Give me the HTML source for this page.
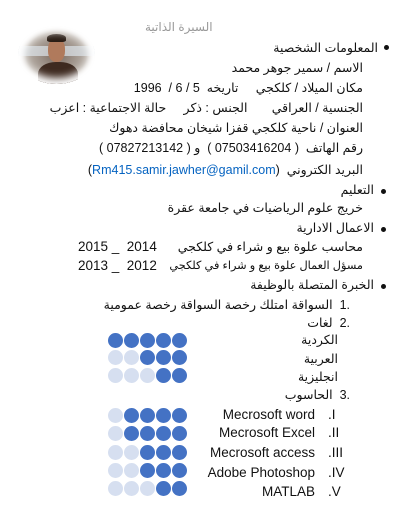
<!DOCTYPE html>
<html><head><meta charset="utf-8"><style>
body{margin:0;width:400px;height:512px;background:#fff;position:relative;overflow:hidden;font-family:"Liberation Sans","DejaVu Sans",sans-serif;color:#111}
.t{position:absolute;direction:rtl;white-space:nowrap;font-size:12.5px;line-height:16px}
.e{position:absolute;white-space:nowrap;font-size:13.5px;line-height:16px;text-align:right}
.b{position:absolute;width:5px;height:5px;border-radius:50%;background:#111}
.d{position:absolute;width:15px;height:15px;border-radius:50%;background:#4472c4}
.l{background:#d6dff0}
a{color:#0563c1}
</style></head><body>
<div class="t" style="left:145px;top:19px;color:#999;font-size:12px">السيرة الذاتية</div>
<div style="position:absolute;left:18px;top:26px;width:77px;height:58px;border-radius:50%;overflow:hidden;background:radial-gradient(ellipse at center,#7a6a60 0%,#b8b0a8 55%,#fff 72%)">
<div style="position:absolute;left:0;top:20px;width:77px;height:10px;background:#dde4ea;opacity:.7"></div>
<div style="position:absolute;left:20px;top:36px;width:40px;height:26px;border-radius:45% 45% 0 0;background:#3e2a20"></div>
<div style="position:absolute;left:30px;top:12px;width:17px;height:24px;border-radius:45%;background:#b07a5c"></div>
<div style="position:absolute;left:29px;top:8px;width:19px;height:8px;border-radius:50% 50% 20% 20%;background:#2a1d15"></div>
<div style="position:absolute;inset:0;border-radius:50%;box-shadow:inset 0 0 8px 6px #fff"></div>
</div>
<div class="b" style="left:384px;top:45px"></div>
<div class="t" style="right:22px;top:40px">المعلومات الشخصية</div>
<div class="t" style="right:37px;top:60px">الاسم / سمير جوهر محمد</div>
<div class="t" style="right:37px;top:80px">مكان الميلاد / كلكجي &nbsp;&nbsp;&nbsp; تاريخه &nbsp;5 / 6 / &nbsp;1996</div>
<div class="t" style="right:37px;top:100px">الجنسية / العراقي &nbsp;&nbsp;&nbsp;&nbsp;&nbsp; الجنس : ذكر &nbsp;&nbsp;&nbsp; حالة الاجتماعية : اعزب</div>
<div class="t" style="right:37px;top:120px">العنوان / ناحية كلكجي قفزا شيخان محافضة دهوك</div>
<div class="t" style="right:37px;top:140px">رقم الهاتف &nbsp;( 07503416204 ) &nbsp;و ( 07827213142 )</div>
<div class="t" style="right:37px;top:162px">البريد الكتروني &nbsp;(<a>Rm415.samir.jawher@gamil.com</a>)</div>
<div class="b" style="left:381px;top:189px"></div>
<div class="t" style="right:26px;top:182px">التعليم</div>
<div class="t" style="right:37px;top:200px">خريج علوم الرياضيات في جامعة عقرة</div>
<div class="b" style="left:381px;top:227px"></div>
<div class="t" style="right:26px;top:220px">الاعمال الادارية</div>
<div class="t" style="right:37px;top:239px">محاسب علوة بيع و شراء في كلكجي</div>
<div class="e" style="left:78px;top:239px">2015 _ &nbsp;2014</div>
<div class="t" style="right:37px;top:258px;font-size:11.3px">مسؤل العمال علوة بيع و شراء في كلكجي</div>
<div class="e" style="left:78px;top:258px">2013 _ &nbsp;2012</div>
<div class="b" style="left:381px;top:284px"></div>
<div class="t" style="right:26px;top:277px">الخبرة المتصلة بالوظيفة</div>
<div class="t" style="right:50px;top:297px">.1 &nbsp;السواقة امتلك رخصة السواقة رخصة عمومية</div>
<div class="t" style="right:50px;top:315px">.2 &nbsp;لغات</div>
<div class="t" style="right:62px;top:332px">الكردية</div>
<div class="t" style="right:62px;top:351px">العربية</div>
<div class="t" style="right:62px;top:369px">انجليزية</div>
<div class="t" style="right:50px;top:387px">.3 &nbsp;الحاسوب</div>
<div class="e" style="right:85px;top:407px">Mecrosoft word</div>
<div class="e" style="right:85px;top:425px">Mecrosoft Excel</div>
<div class="e" style="right:85px;top:445px">Mecrosoft access</div>
<div class="e" style="right:85px;top:465px">Adobe Photoshop</div>
<div class="e" style="right:85px;top:484px">MATLAB</div>
<div class="e" style="left:328px;top:407px">.I</div>
<div class="e" style="left:328px;top:425px">.II</div>
<div class="e" style="left:328px;top:445px">.III</div>
<div class="e" style="left:328px;top:465px">.IV</div>
<div class="e" style="left:328px;top:484px">.V</div>
<div class="d" style="left:108px;top:333px"></div><div class="d" style="left:124px;top:333px"></div><div class="d" style="left:140px;top:333px"></div><div class="d" style="left:156px;top:333px"></div><div class="d" style="left:172px;top:333px"></div>
<div class="d l" style="left:108px;top:350px"></div><div class="d l" style="left:124px;top:350px"></div><div class="d" style="left:140px;top:350px"></div><div class="d" style="left:156px;top:350px"></div><div class="d" style="left:172px;top:350px"></div>
<div class="d l" style="left:108px;top:368px"></div><div class="d l" style="left:124px;top:368px"></div><div class="d l" style="left:140px;top:368px"></div><div class="d" style="left:156px;top:368px"></div><div class="d" style="left:172px;top:368px"></div>
<div class="d l" style="left:108px;top:408px"></div><div class="d" style="left:124px;top:408px"></div><div class="d" style="left:140px;top:408px"></div><div class="d" style="left:156px;top:408px"></div><div class="d" style="left:172px;top:408px"></div>
<div class="d l" style="left:108px;top:426px"></div><div class="d" style="left:124px;top:426px"></div><div class="d" style="left:140px;top:426px"></div><div class="d" style="left:156px;top:426px"></div><div class="d" style="left:172px;top:426px"></div>
<div class="d l" style="left:108px;top:445px"></div><div class="d l" style="left:124px;top:445px"></div><div class="d" style="left:140px;top:445px"></div><div class="d" style="left:156px;top:445px"></div><div class="d" style="left:172px;top:445px"></div>
<div class="d l" style="left:108px;top:463px"></div><div class="d l" style="left:124px;top:463px"></div><div class="d" style="left:140px;top:463px"></div><div class="d" style="left:156px;top:463px"></div><div class="d" style="left:172px;top:463px"></div>
<div class="d l" style="left:108px;top:481px"></div><div class="d l" style="left:124px;top:481px"></div><div class="d l" style="left:140px;top:481px"></div><div class="d" style="left:156px;top:481px"></div><div class="d" style="left:172px;top:481px"></div>
</body></html>
